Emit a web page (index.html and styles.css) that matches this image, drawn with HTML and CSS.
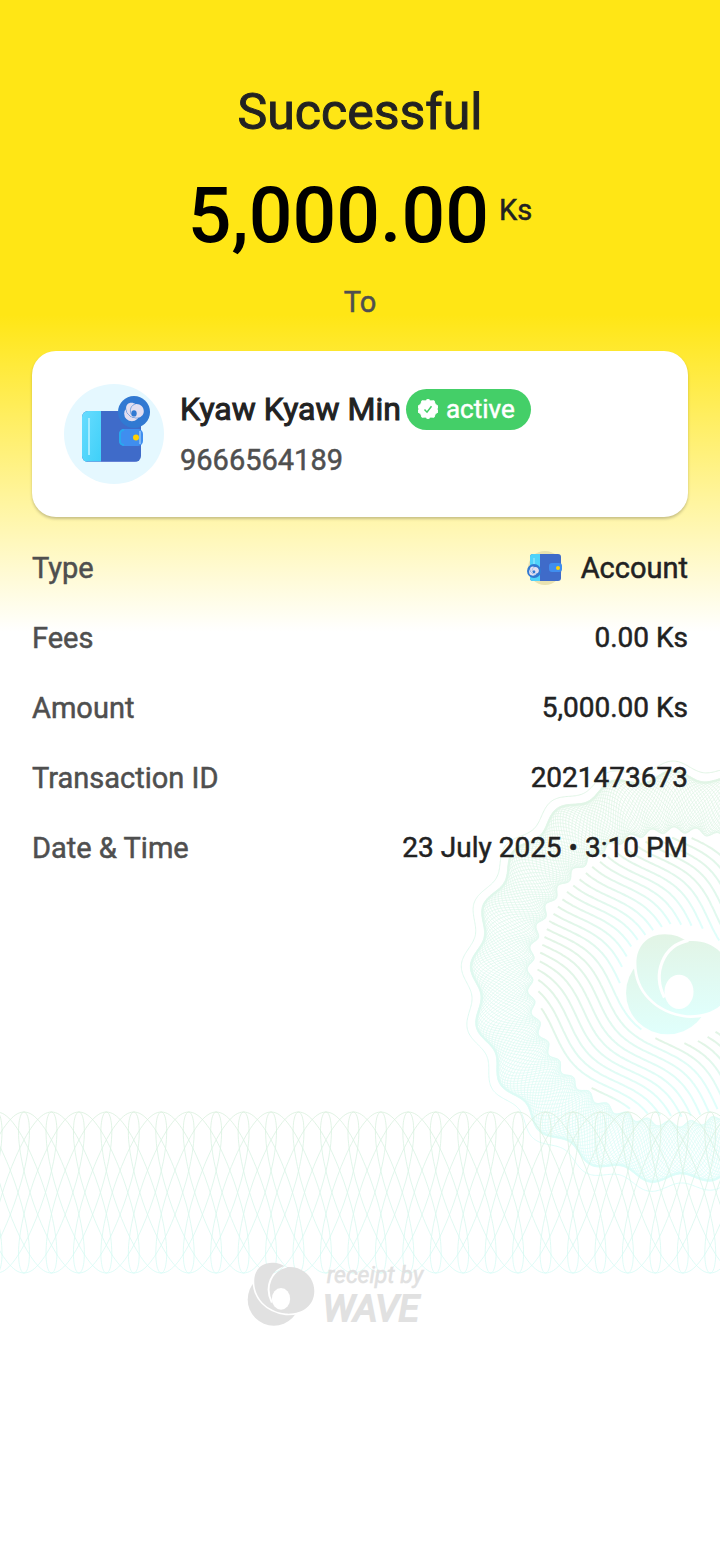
FILE: index.html
```html
<!DOCTYPE html>
<html lang="en">
<head>
<meta charset="utf-8">
<meta name="viewport" content="width=device-width, initial-scale=1">
<title>Receipt</title>
<link rel="stylesheet" href="styles.css">
</head>
<body>
<svg class="defs" aria-hidden="true">
  <defs>
    <linearGradient id="mint" x1="0" y1="0" x2="0" y2="1">
      <stop offset="0" stop-color="#e2f4e5"/><stop offset="1" stop-color="#e0fffc"/>
    </linearGradient>
    <linearGradient id="mintBand" gradientUnits="userSpaceOnUse" x1="0" y1="0" x2="0" y2="164">
      <stop offset="0" stop-color="#d9efdc"/><stop offset="1" stop-color="#d6fbf6"/>
    </linearGradient>
    <linearGradient id="mintRing" gradientUnits="userSpaceOnUse" x1="0" y1="-215" x2="0" y2="215">
      <stop offset="0" stop-color="#e1f4e4"/><stop offset="1" stop-color="#dcfdfa"/>
    </linearGradient>
    <linearGradient id="cyan" x1="0" y1="0" x2="1" y2="1">
      <stop offset="0" stop-color="#68dcff"/><stop offset="1" stop-color="#3fd0f8"/>
    </linearGradient>
    <mask id="lowerMask" maskUnits="userSpaceOnUse" x="0" y="0" width="300" height="300">
      <rect width="300" height="300" fill="#fff"/>
      <path d="M122 38C142 38 155 44 166 52C212 46 252 80 252 125C252 170 215 197 165 194C105 187 68 145 68 95C68 60 90 38 122 38Z" fill="#000" stroke="#000" stroke-width="10"/>
    </mask>
    <mask id="upperMask" maskUnits="userSpaceOnUse" x="0" y="0" width="300" height="300">
      <rect width="300" height="300" fill="#fff"/>
      <path d="M168 50C120 60 98 112 122 160" fill="none" stroke="#000" stroke-width="6"/>
      <ellipse cx="150" cy="149" rx="28" ry="33" fill="#000"/>
    </mask>
    <symbol id="swirl" viewBox="46 36 208 196">
      <circle cx="128" cy="151" r="80" mask="url(#lowerMask)"/>
      <path mask="url(#upperMask)" d="M122 38C142 38 155 44 166 52C212 46 252 80 252 125C252 170 215 197 165 194C105 187 68 145 68 95C68 60 90 38 122 38Z"/>
    </symbol>
  </defs>
</svg>
<main class="receipt">
  <svg class="rosette" viewBox="-220 -220 440 440" aria-hidden="true">
    <g id="ring"></g>
    <g id="stripes"></g>
    <use href="#swirl" x="-52" y="-44" width="108" height="102" fill="url(#mint)"/>
  </svg>
  <svg class="band" aria-hidden="true"><g id="band"></g></svg>

  <header class="summary">
    <h1 class="status">Successful</h1>
    <p class="total"><span class="total-value">5,000.00</span><span class="total-unit">Ks</span></p>
    <p class="to">To</p>
  </header>

  <section class="card">
    <svg class="avatar" viewBox="0 0 100 100" aria-hidden="true">
      <circle cx="50" cy="50" r="50" fill="#e5f8ff"/>
      <rect x="18" y="27" width="59" height="51" rx="6" fill="#3f6bc9"/>
      <path d="M37 27H24a6 6 0 0 0-6 6v39a6 6 0 0 0 6 6h13z" fill="url(#cyan)"/>
      <path d="M25 34v37" stroke="#a5ecff" stroke-width="2"/>
      <path d="M23 77.500h49" stroke="#7f91dd" stroke-width="1" opacity=".6"/>
      <circle cx="70" cy="28" r="16" fill="#3179d2"/>
      <use href="#swirl" x="60" y="18" width="20" height="20" fill="#e3dff0"/>
      <rect x="55" y="45" width="24" height="17" rx="5" fill="#3f8eef"/>
      <path d="M60 46a4 4 0 0 0-4 4v7a4 4 0 0 0 4 4" fill="none" stroke="#28a9ee" stroke-width="2"/>
      <path d="M76 47v13" stroke="#7db7f6" stroke-width="2"/>
      <circle cx="72" cy="53.500" r="3" fill="#ffd105"/>
    </svg>
    <div class="person">
      <div class="name-line">
        <h2 class="name">Kyaw Kyaw Min</h2>
        <span class="badge">
          <svg class="badge-icon" viewBox="0 0 20 20" aria-hidden="true">
            <path d="M10 0l2.700 1.900 3.400-.1 1 3.200L20 7.200 19 10l1 3-2.800 1.900-1.100 3.300-3.400-.1L10 20l-2.700-1.900-3.400.1-1.100-3.300L0 13l1-3L0 7.200 2.900 5l1-3.200 3.400.1z" fill="#fff" stroke="#fff" stroke-linejoin="round"/>
            <path d="M6.500 10.500l2.500 2.700 4.500-6" fill="none" stroke="#44cf68" stroke-width="1.500"/>
          </svg>
          active
        </span>
      </div>
      <p class="phone">9666564189</p>
    </div>
  </section>

  <dl class="details">
    <div class="row">
      <dt>Type</dt>
      <dd class="type">
        <svg class="type-icon" viewBox="0 0 36 36" aria-hidden="true">
          <circle cx="18" cy="18" r="17" fill="#e9e2b0"/>
          <rect x="3" y="4" width="31" height="27" rx="3" fill="#3f6bc9"/>
          <path d="M13 4H6a3 3 0 0 0-3 3v21a3 3 0 0 0 3 3h7z" fill="#4fd3fa"/>
          <path d="M7 8v8" stroke="#a5ecff"/>
          <circle cx="7" cy="21" r="7" fill="#3179d2"/>
          <use href="#swirl" x="2" y="16" width="10" height="10" fill="#e3dff0"/>
          <rect x="22" y="13" width="13" height="9" rx="3" fill="#3f8eef"/>
          <circle cx="31" cy="18" r="2" fill="#ffd105"/>
        </svg>
        Account
      </dd>
    </div>
    <div class="row"><dt>Fees</dt><dd>0.00 Ks</dd></div>
    <div class="row"><dt>Amount</dt><dd>5,000.00 Ks</dd></div>
    <div class="row"><dt>Transaction ID</dt><dd>2021473673</dd></div>
    <div class="row"><dt>Date &amp; Time</dt><dd>23 July 2025 • 3:10 PM</dd></div>
  </dl>

  <footer class="brand">
    <svg class="brand-logo" viewBox="0 0 68 64" aria-hidden="true"><use href="#swirl" width="68" height="64" fill="#e1e1e1"/></svg>
    <div class="brand-text">
      <span class="brand-small">receipt by</span>
      <span class="brand-big">WAVE</span>
    </div>
  </footer>
</main>
<script src="guilloche.js"></script>
</body>
</html>
```

FILE: styles.css
```css
* { box-sizing: border-box; margin: 0; padding: 0; }

body {
  background: #fff;
  color: #222;
  font-family: Roboto, "Noto Sans", sans-serif;
  font-size: 29px;
  line-height: 40px;
  font-weight: 400;
  -webkit-text-stroke: 0.5px currentColor;
}

.defs { position: absolute; width: 0; height: 0; }

.receipt {
  position: relative;
  min-height: 100vh;
  overflow: hidden;
  padding: 82px 32px 0;
  background: linear-gradient(#ffe615 0, #ffe615 315px, #fff 632px);
}

.rosette {
  position: absolute;
  top: 757px;
  right: -177px;
  width: 440px;
  height: 440px;
}

.band {
  position: absolute;
  top: 1111px;
  left: 0;
  width: 100%;
  height: 164px;
}

.rosette path, .band path { fill: none; }

.summary { position: relative; text-align: center; }
.status { font-size: 50px; line-height: 60px; font-weight: 400; -webkit-text-stroke-width: 1px; }
.total {
  display: flex;
  justify-content: center;
  align-items: flex-start;
  gap: 10px;
  margin-top: 30px;
}
.total-value { color: #000; font-size: 77px; line-height: 88px; font-weight: 500; -webkit-text-stroke-width: 0; }
.total-unit { padding-top: 18px; }
.to { margin-top: 22px; color: #4f4f4f; }

.card {
  position: relative;
  display: flex;
  align-items: center;
  gap: 16px;
  margin-top: 29px;
  padding: 33px 32px;
  background: #fff;
  border-radius: 24px;
  box-shadow: 0 2px 3px rgba(0, 0, 0, 0.22);
}
.avatar { flex: none; width: 100px; height: 100px; }
.name-line { display: flex; align-items: center; gap: 5px; }
.name { font-size: 32px; line-height: 40px; font-weight: 400; -webkit-text-stroke-width: 1px; }
.badge {
  display: flex;
  align-items: center;
  gap: 8px;
  height: 41px;
  padding: 0 16px 0 12px;
  border-radius: 21px;
  background: #44cf68;
  color: #fff;
  font-size: 26px;
}
.badge-icon { width: 20px; height: 20px; }
.phone { margin-top: 10px; color: #4f4f4f; }

.details { position: relative; margin-top: 31px; }
.row { display: flex; justify-content: space-between; margin-bottom: 30px; }
.row dt { color: #4f4f4f; }
.row dd { font-size: 28px; }
.row .type { display: flex; align-items: center; gap: 18px; font-size: 29px; }
.type-icon { width: 36px; height: 36px; }

.brand {
  position: relative;
  display: flex;
  justify-content: center;
  gap: 8px;
  margin-top: 394px;
  padding-right: 50px;
  color: #e1e1e1;
}
.brand-logo { width: 68px; height: 64px; }
.brand-text { display: flex; flex-direction: column; font-style: italic; }
.brand-small { padding-left: 4px; font-size: 23px; line-height: 28px; }
.brand-big { font-size: 37px; line-height: 38px; -webkit-text-stroke-width: 2px; }
```

FILE: guilloche.js
```js
const NS = "http://www.w3.org/2000/svg";

function addPath(parent, points, stroke, width, closed) {
  const path = document.createElementNS(NS, "path");
  const d = points.map(p => p[0].toFixed(1) + " " + p[1].toFixed(1)).join("L");
  path.setAttribute("d", "M" + d + (closed ? "Z" : ""));
  path.setAttribute("stroke", stroke);
  path.setAttribute("stroke-width", width);
  parent.appendChild(path);
}

// Band: arches at one edge, tight loops at the other, plus the flipped set.
const band = document.getElementById("band");
const step = 27.45;
for (let k = -6; k * step < window.innerWidth + 120; k++) {
  for (const flip of [1, -1]) {
    const points = [];
    for (let t = -Math.PI; t <= Math.PI + 0.01; t += Math.PI / 48) {
      const x = 24 + k * step + 17.47 * t + 21.5 * Math.sin(t) - 3.9 * Math.sin(2 * t);
      points.push([x, 81.500 - flip * 80.500 * Math.cos(t)]);
    }
    addPath(band, points, "url(#mintBand)", 0.8);
  }
}

// Ring: mesh between a wavy outer edge and a finer inner edge.
const ring = document.getElementById("ring");
const bumps = 21;
const phase = 97.4 * Math.PI / 180;
const outer = a => 202 + 5 * Math.cos(bumps * (a - phase));
const inner = a => 147 + 3 * Math.cos(2 * bumps * (a - phase));

function polar(radius) {
  const points = [];
  for (let i = 0; i < 1080; i++) {
    const a = i * Math.PI / 540;
    const r = radius(a);
    points.push([r * Math.cos(a), r * Math.sin(a)]);
  }
  return points;
}

addPath(ring, polar(a => outer(a) + 9), "url(#mintRing)", 1, true);
addPath(ring, polar(a => outer(a) - 1), "url(#mintRing)", 2, true);
for (let j = 0; j < 32; j++) {
  const shift = j * Math.PI / 16;
  addPath(ring, polar(a => {
    const m = 0.5 + 0.5 * Math.cos(10 * a + shift);
    return inner(a) + (outer(a) - inner(a)) * m;
  }), "url(#mintRing)", 0.8, true);
}

// Stripes: wavy diagonals inside the ring, kept clear of the centre mark.
const stripes = document.getElementById("stripes");
for (let v = -153; v <= 153; v += 9) {
  let run = [];
  const flush = () => {
    if (run.length > 8) addPath(stripes, run, "url(#mint)", 2);
    run = [];
  };
  for (let u = -160; u <= 160; u += 2) {
    const w = v + 9 * Math.sin(2 * Math.PI * (u + 37 + (v - 57) * 0.15) / 155);
    const x = (u - w) * Math.SQRT1_2;
    const y = (u + w) * Math.SQRT1_2;
    const clear = Math.hypot(x, y) < 140 && Math.hypot(x - 2, y - 7) > 59;
    if (clear) run.push([x, y]); else flush();
  }
  flush();
}
```
